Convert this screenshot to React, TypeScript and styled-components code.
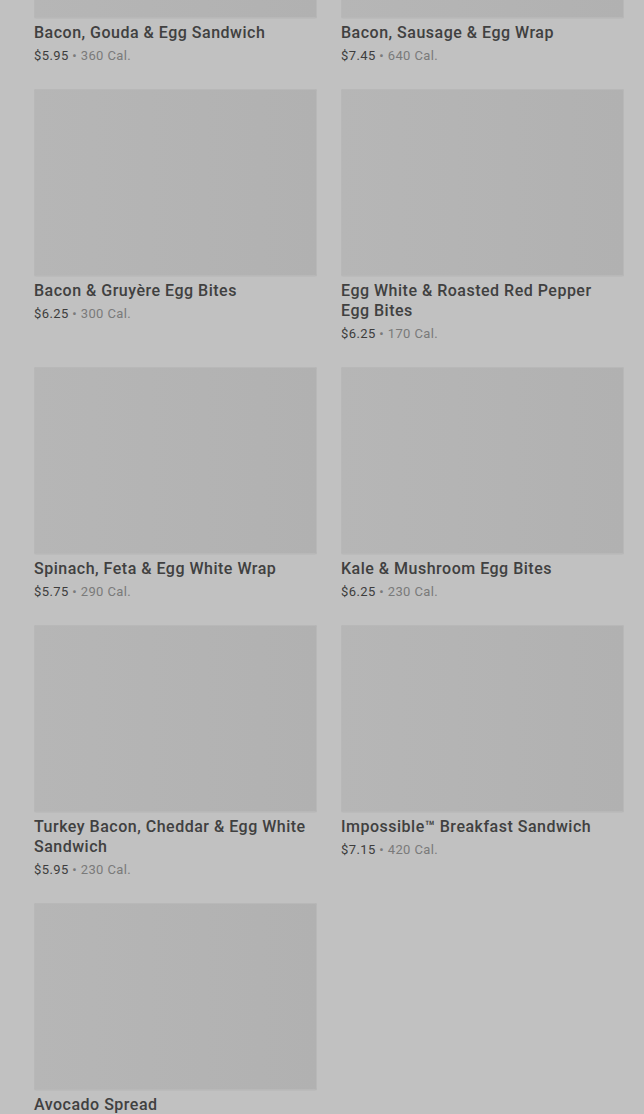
import React from "react";
import styled, { createGlobalStyle } from "styled-components";

const Global = createGlobalStyle`
  html, body { margin: 0; padding: 0; background: #c1c1c1; overflow: hidden; }
  body { font-family: Roboto, "Liberation Sans", sans-serif; }
`;

const Grid = styled.div`
  display: grid;
  grid-template-columns: 283px 283px;
  column-gap: 24px;
  row-gap: 23px;
  padding: 0 20px 0 34px;
  margin-top: -169px;
  align-items: start;
`;

const Card = styled.div`
  display: flex;
  flex-direction: column;
`;

const Thumb = styled.div`
  height: 187px;
  border-radius: 2px;
  background: linear-gradient(90deg, #b6b6b6 0%, #b3b3b3 60%, #b1b1b1 100%);
  box-shadow: inset 0 0 0 1px #b8b8b8, 0 1px 1px rgba(0, 0, 0, 0.03);
`;

const Title = styled.div`
  margin-top: 5px;
  padding-right: 10px;
  font-size: 16px;
  line-height: 20px;
  font-weight: 500;
  color: #404040;
  letter-spacing: 0.5px;
`;

const Meta = styled.div`
  margin-top: 3px;
  font-size: 13px;
  line-height: 20px;
  color: #7a7a7a;
  letter-spacing: 0.4px;
`;

const Price = styled.span`
  color: #3d3d3d;
`;

const items = [
  { name: "Bacon, Gouda & Egg Sandwich", price: "$5.95", cal: "360 Cal." },
  { name: "Bacon, Sausage & Egg Wrap", price: "$7.45", cal: "640 Cal." },
  { name: "Bacon & Gruyère Egg Bites", price: "$6.25", cal: "300 Cal." },
  { name: "Egg White & Roasted Red Pepper Egg Bites", price: "$6.25", cal: "170 Cal." },
  { name: "Spinach, Feta & Egg White Wrap", price: "$5.75", cal: "290 Cal." },
  { name: "Kale & Mushroom Egg Bites", price: "$6.25", cal: "230 Cal." },
  { name: "Turkey Bacon, Cheddar & Egg White Sandwich", price: "$5.95", cal: "230 Cal." },
  { name: "Impossible™ Breakfast Sandwich", price: "$7.15", cal: "420 Cal." },
  { name: "Avocado Spread", price: "$1.25", cal: "90 Cal." },
];

export default function App() {
  return (
    <>
      <Global />
      <Grid>
        {items.map((it) => (
          <Card key={it.name}>
            <Thumb />
            <Title>{it.name}</Title>
            <Meta>
              <Price>{it.price}</Price> • {it.cal}
            </Meta>
          </Card>
        ))}
      </Grid>
    </>
  );
}
